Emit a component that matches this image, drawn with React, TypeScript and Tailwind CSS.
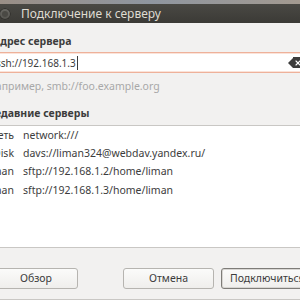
import { X } from 'lucide-react';

const recent = [
    { name: 'Сеть', uri: 'network:///' },
    { name: 'Yandex.Disk', uri: 'davs://liman324@webdav.yandex.ru/' },
    { name: 'liman', uri: 'sftp://192.168.1.2/home/liman' },
    { name: 'liman', uri: 'sftp://192.168.1.3/home/liman' },
];

export default function App() {
    return (
        <div className="flex h-[300px] w-[300px] flex-col overflow-hidden bg-[#f2f1f0] font-['Noto_Sans',sans-serif] text-[#3c3c3c]">
            {/* desktop behind the window */}
            <div className="h-[4px] shrink-0 bg-gradient-to-r from-[#9a8f86] via-[#8f96a0] to-[#a39a90]" />

            {/* title bar */}
            <div className="flex h-[19px] shrink-0 items-center gap-[10px] bg-gradient-to-b from-[#4a4944] to-[#3b3a36]">
                <div className="-ml-[1px] flex h-[12px] w-[12px] items-center justify-center rounded-full bg-gradient-to-b from-[#6a6964] to-[#55544f] shadow-[inset_0_0_0_1px_#32312d]">
                    <div className="h-[6px] w-[6px] rounded-full bg-[#4a4944]" />
                </div>
                <span className="text-[12px] leading-none text-[#dfdbd2]">Подключение к серверу</span>
            </div>

            <div className="flex min-h-0 flex-1 flex-col">
                <div className="-ml-[7px] mt-[10px] text-[10.5px] font-bold leading-[16px]">Адрес сервера</div>

                <div className="mt-[3px] flex h-[21px] items-center border-y border-[#eeb19a] bg-white shadow-[inset_0_1px_0_#fbe3d9,inset_0_-1px_0_#fbe3d9]">
                    <span className="-ml-[4px] text-[10px] leading-none">ssh://192.168.1.3</span>
                    <span className="ml-[1px] h-[14px] w-px bg-[#3c3c3c]" />
                    <div className="ml-auto mr-[-3px] flex h-[11px] items-center">
                        <div className="h-0 w-0 border-y-[5.5px] border-r-[5px] border-y-transparent border-r-[#3c3c3c]" />
                        <div className="flex h-[11px] w-[10px] items-center justify-center bg-[#3c3c3c]">
                            <X size={8} strokeWidth={3.5} color="#ffffff" />
                        </div>
                    </div>
                </div>

                <div className="-ml-[12px] mt-[5px] text-[10.5px] leading-[16px] text-[#a8a8a8]">Например, smb://foo.example.org</div>

                <div className="-ml-[13px] mt-[11px] text-[10.5px] font-bold leading-[16px]">Недавние серверы</div>

                <div className="mt-[4px] flex h-[123px] flex-col border-y border-[#c9c7c4] bg-white">
                    {recent.map((r, i) => (
                        <div key={i} className="flex h-[18.3px] items-center text-[10.5px] leading-none">
                            <span className="-ml-[61px] w-[75px] shrink-0 text-right">{r.name}</span>
                            <span className="ml-[9px]">{r.uri}</span>
                        </div>
                    ))}
                </div>

                <div className="mt-[20px] flex items-center">
                    <button className="-ml-[20px] h-[21px] w-[98px] shrink-0 rounded-[3px] border border-[#b6b4b0] bg-gradient-to-b from-[#fbfbfa] to-[#efeeec] pl-[14px] text-[10.5px] leading-none">
                        Обзор
                    </button>
                    <button className="ml-[45px] h-[21px] w-[91px] shrink-0 rounded-[3px] border border-[#b6b4b0] bg-gradient-to-b from-[#fbfbfa] to-[#efeeec] text-[10.5px] leading-none">
                        Отмена
                    </button>
                    <button className="ml-[7px] flex h-[21px] w-[92px] shrink-0 items-center rounded-[3px] border border-[#7e7c78] bg-gradient-to-b from-[#fbfbfa] to-[#efeeec] pl-[8px] text-[10.5px] leading-none shadow-[inset_0_0_0_1px_#d8d6d3]">
                        Подключиться
                    </button>
                </div>
                <div className="mt-auto h-px bg-[#c9c7c4]" />
            </div>
        </div>
    );
}
